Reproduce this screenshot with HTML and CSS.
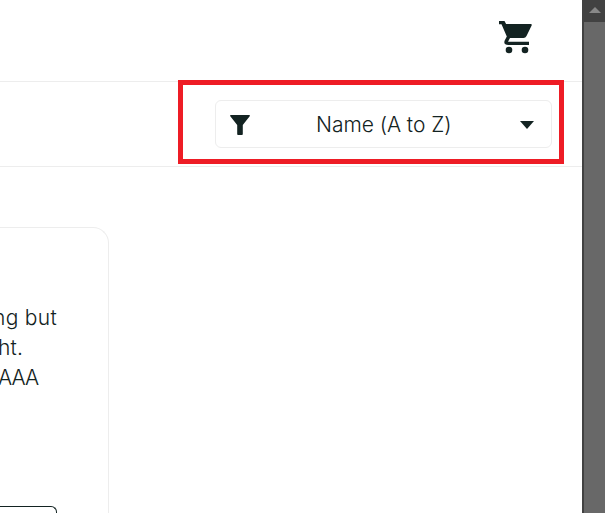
FILE: index.html
```html
<!DOCTYPE html>
<html lang="en">
<head>
<meta charset="utf-8">
<title>Products</title>
<link rel="stylesheet" href="styles.css">
</head>
<body>
<div class="page">
  <header class="header">
    <svg class="cart" viewBox="0 0 36 36" aria-label="Cart">
      <path d="M2 3h5.500l1.600 3H33.500q2 0 1 1.800L29.500 18q-1 2-3 2H13l-2 3.800H32v3.200H11.500Q6 27 7.700 22.500L9.800 18.500 4.500 6.200H2z"/>
      <circle cx="12" cy="32" r="3.300"/><circle cx="28" cy="32" r="3.300"/>
    </svg>
  </header>
  <div class="toolbar">
    <div class="select">
      <svg class="funnel" viewBox="0 0 20 20"><path d="M1 0H19Q20.500 0 19.700 1.300L12.800 10V19Q12.800 20 12 20H8Q7.200 20 7.200 19V10L.3 1.300Q-.5 0 1 0z"/></svg>
      <span class="value">Name (A to Z)</span>
      <svg class="arrow" viewBox="0 0 14 8"><path d="M0 0H14L7 8z"/></svg>
    </div>
    <div class="highlight"></div>
  </div>
  <main class="content">
    <article class="card">
      <p class="description"><span class="line one">ng but</span><span class="line two">ht.</span><span class="line three">AAA</span></p>
      <div class="button"></div>
    </article>
  </main>
</div>
<div class="scrollbar">
  <div class="scroll-up"><svg class="up" viewBox="0 0 12 6"><path d="M0 6L6 0 12 6z"/></svg></div>
  <div class="thumb"></div>
</div>
</body>
</html>
```
FILE: styles.css
```css
* { box-sizing: border-box; }
body {
  margin: 0;
  height: 513px;
  display: flex;
  overflow: hidden;
  background: #fff;
  color: #132322;
  font: 300 21px/30px Inter, "Liberation Sans", sans-serif;
}
svg { display: block; flex: none; fill: #132322; }
.page { width: 582px; height: 513px; overflow: hidden; }
.header {
  height: 82px;
  border-bottom: 1px solid #ededed;
  display: flex;
  justify-content: flex-end;
  padding: 18px 49px 0 0;
}
.cart { width: 36px; height: 36px; }
.toolbar {
  position: relative;
  height: 85px;
  border-bottom: 1px solid #ededed;
  display: flex;
  justify-content: flex-end;
  padding: 18px 30px 0 0;
}
.select {
  width: 337px;
  height: 48px;
  border: 1px solid #ededed;
  border-radius: 6px;
  display: flex;
  align-items: center;
  padding: 2px 17px 0 14px;
}
.funnel { width: 20px; height: 20px; }
.value { width: 140px; margin-left: 66px; white-space: nowrap; letter-spacing: -.05px; }
.arrow { width: 14px; height: 8px; margin-left: auto; }
.highlight {
  position: absolute;
  left: 178px;
  top: -2px;
  width: 386px;
  height: 84px;
  border: 5px solid #ee1c25;
}
.content { padding-top: 60px; }
.card {
  width: 109px;
  height: 310px;
  border: solid #ededed;
  border-width: 1px 1px 0 0;
  border-radius: 0 16px 0 0;
  padding-top: 75px;
}
.description { margin: 0; height: 203px; }
.line { display: block; white-space: nowrap; }
.one { margin-left: -7px; letter-spacing: .3px; }
.two { margin-left: -2px; letter-spacing: .2px; }
.three { margin-left: -2px; letter-spacing: -1px; }
.button {
  width: 57px;
  height: 40px;
  border: solid #132322;
  border-width: 1px 1px 0 0;
  border-radius: 0 6px 0 0;
}
.scrollbar { width: 23px; height: 513px; background: #424242; }
.scroll-up { height: 22px; padding: 7px 0 0 7px; }
.up { width: 12px; height: 6px; fill: #888; }
.thumb { height: 491px; margin-left: 2px; background: #686868; }
```
